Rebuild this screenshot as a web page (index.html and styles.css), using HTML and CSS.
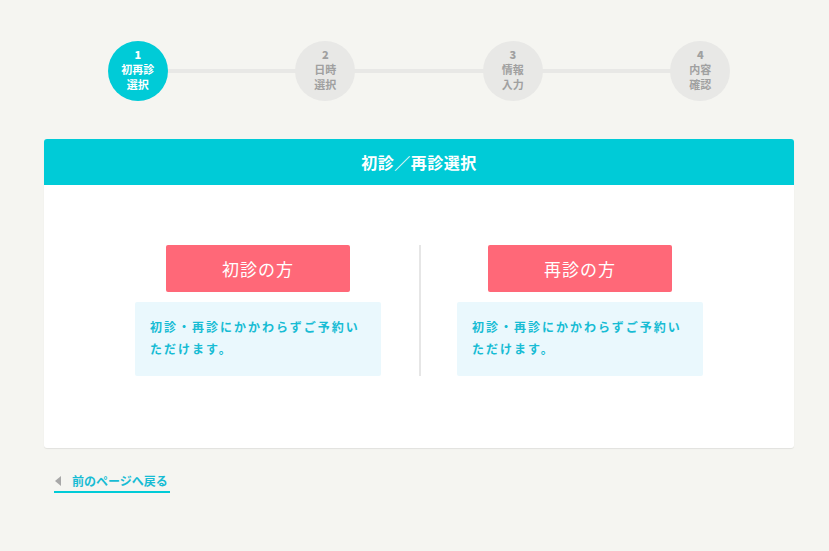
FILE: index.html
```html
<!DOCTYPE html>
<html>
<head>
  <title>初診／再診選択</title>
  <link rel="stylesheet" href="styles.css">
</head>
<body>
  <div class="container">
    <ol class="steps">
      <li class="step active"><span class="circle"><b>1</b>初再診<br>選択</span></li>
      <li class="step"><span class="circle"><b>2</b>日時<br>選択</span></li>
      <li class="step"><span class="circle"><b>3</b>情報<br>入力</span></li>
      <li class="step"><span class="circle"><b>4</b>内容<br>確認</span></li>
    </ol>

    <div class="card">
      <h1 class="card-title">初診／再診選択</h1>
      <div class="card-body">
        <div class="choice">
          <a class="choice-btn" href="#">初診の方</a>
          <p class="choice-note">初診・再診にかかわらずご予約いただけます。</p>
        </div>
        <div class="divider"></div>
        <div class="choice">
          <a class="choice-btn" href="#">再診の方</a>
          <p class="choice-note">初診・再診にかかわらずご予約いただけます。</p>
        </div>
      </div>
    </div>

    <a class="back-link" href="#"><span class="arrow"></span>前のページへ戻る</a>
  </div>
</body>
</html>
```

FILE: styles.css
```css
body {
  margin: 0;
  padding-left: 9px;
  background-color: #f5f5f1;
  font-family: "Noto Sans CJK JP", "Noto Sans", sans-serif;
}

.container {
  width: 750px;
  margin: 0 auto;
  padding-top: 41px;
}

.steps {
  display: flex;
  list-style: none;
  margin: 0;
  padding: 0;
}

.step {
  position: relative;
  flex: 1;
  display: flex;
  justify-content: center;
}

.step + .step::before {
  content: "";
  position: absolute;
  top: 28px;
  right: 50%;
  width: 100%;
  height: 4px;
  background-color: #e8e8e6;
}

.circle {
  position: relative;
  z-index: 1;
  width: 60px;
  height: 60px;
  border-radius: 50%;
  background-color: #e8e8e6;
  color: #a0a0a0;
  display: flex;
  flex-direction: column;
  justify-content: center;
  align-items: center;
  text-align: center;
  font-size: 11px;
  font-weight: bold;
  line-height: 15px;
  padding-bottom: 3px;
  box-sizing: border-box;
}

.circle b {
  display: block;
}

.step.active .circle {
  background-color: #00cbd7;
  color: #fff;
}

.card {
  margin-top: 38px;
  background-color: #fff;
  border-radius: 3px;
  box-shadow: 0 1px 1px rgba(0, 0, 0, 0.08);
  overflow: hidden;
}

.card-title {
  margin: 0;
  height: 46px;
  line-height: 46px;
  background-color: #00cbd7;
  color: #fff;
  text-align: center;
  font-size: 16px;
  font-weight: bold;
  letter-spacing: 0.5px;
}

.card-body {
  display: flex;
  justify-content: center;
  padding: 60px 0 72px;
}

.choice {
  width: 246px;
  display: flex;
  flex-direction: column;
  align-items: center;
}

.divider {
  width: 2px;
  margin: 0 36px 0 38px;
  background-color: #e6e6e6;
}

.choice-btn {
  display: block;
  width: 184px;
  height: 47px;
  line-height: 47px;
  background-color: #ff6878;
  border-radius: 2px;
  color: #fff;
  text-align: center;
  font-size: 17px;
  letter-spacing: 1px;
  text-decoration: none;
}

.choice-note {
  margin: 10px 0 0;
  width: 100%;
  box-sizing: border-box;
  padding: 14px 15px 16px;
  background-color: #eaf8fd;
  border-radius: 2px;
  color: #17bcd4;
  font-size: 12px;
  font-weight: bold;
  line-height: 22px;
  letter-spacing: 2px;
}

.back-link {
  display: inline-flex;
  align-items: center;
  margin: 25px 0 0 10px;
  padding: 0 2px 2px 1px;
  border-bottom: 2px solid #00cbd7;
  color: #17bcd4;
  font-size: 12px;
  font-weight: bold;
  line-height: 16px;
  text-decoration: none;
}

.arrow {
  width: 0;
  height: 0;
  margin-right: 11px;
  border-top: 5px solid transparent;
  border-bottom: 5px solid transparent;
  border-right: 6px solid #a8a8a8;
}
```
